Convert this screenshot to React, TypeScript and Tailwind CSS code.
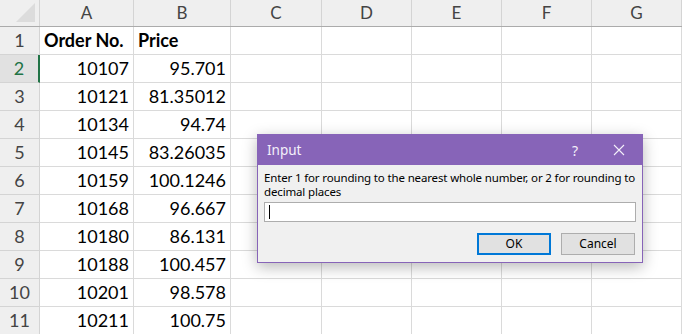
const cols = [
  { name: "A", w: "w-[94px]" },
  { name: "B", w: "w-[97px]" },
  { name: "C", w: "w-[91px]" },
  { name: "D", w: "w-[90px]" },
  { name: "E", w: "w-[90px]" },
  { name: "F", w: "w-[90px]" },
  { name: "G", w: "w-[90px]" },
];

const data: [string, string][] = [
  ["10107", "95.701"],
  ["10121", "81.35012"],
  ["10134", "94.74"],
  ["10145", "83.26035"],
  ["10159", "100.1246"],
  ["10168", "96.667"],
  ["10180", "86.131"],
  ["10188", "100.457"],
  ["10201", "98.578"],
  ["10211", "100.75"],
];

function Dialog() {
  return (
    <div
      className="absolute left-[257px] top-[134px] w-[386px] h-[129px] border border-[#8764b8] bg-[#f0f0f0] shadow-[0_4px_14px_rgba(0,0,0,0.28)] flex flex-col"
      style={{ fontFamily: '"Noto Sans", "Open Sans", sans-serif' }}
    >
      <div className="h-[30px] bg-[#8764b8] flex items-center pl-[9px] pr-[12px] text-white">
        <span className="text-[13.5px] text-[#f4f0fa]">Input</span>
        <span className="ml-auto mr-[35px] text-[14px] text-[#f4f0fa]">?</span>
        <svg width="12" height="12" viewBox="0 0 12 12" className="mr-[5px]">
          <path d="M1 1 L11 11 M11 1 L1 11" stroke="#f4f0fa" strokeWidth="1.1" />
        </svg>
      </div>
      <div className="px-[6px] pt-[6px] text-[11.5px] leading-[14px] text-black tracking-[-0.15px]">
        <div>Enter 1 for rounding to the nearest whole number, or 2 for rounding to</div>
        <div>decimal places</div>
      </div>
      <div className="mx-[6px] mt-[3px] h-[20px] w-[372px] bg-white border border-[#adadad] flex items-center pl-[4px]">
        <div className="w-px h-[14px] bg-black" />
      </div>
      <div className="flex justify-end gap-[10px] mt-[11px] pr-[7px]">
        <button className="w-[74px] h-[22px] bg-[#e1e1e1] border-2 border-[#0078d7] text-[12px] text-black flex items-center justify-center">
          OK
        </button>
        <button className="w-[74px] h-[22px] bg-[#e1e1e1] border border-[#adadad] text-[12px] text-black flex items-center justify-center">
          Cancel
        </button>
      </div>
    </div>
  );
}

export default function App() {
  return (
    <div
      className="relative w-[682px] h-[334px] overflow-hidden bg-white"
      style={{ fontFamily: "Lato, Carlito, sans-serif" }}
    >
      <div className="flex h-[27px] bg-[#efefef] border-b border-[#ababab]">
        <div className="w-[40px] border-r border-[#d4d4d4] relative">
          <div className="absolute right-[4px] bottom-[4px] w-0 h-0 border-l-[19px] border-l-transparent border-b-[19px] border-b-[#dcdcdc]" />
        </div>
        {cols.map((c) => (
          <div
            key={c.name}
            className={`${c.w} border-r border-[#d4d4d4] flex items-center justify-center text-[17px] text-[#444]`}
          >
            {c.name}
          </div>
        ))}
      </div>
      {Array.from({ length: 11 }).map((_, i) => {
        const row = i + 1;
        const active = row === 2;
        const cells: { text: string; bold?: boolean; right?: boolean }[] =
          row === 1
            ? [{ text: "Order No.", bold: true }, { text: "Price", bold: true }]
            : [
                { text: data[i - 1][0], right: true },
                { text: data[i - 1][1], right: true },
              ];
        return (
          <div key={row} className="flex h-[28px]">
            <div
              className={
                active
                  ? "w-[40px] bg-[#e1e1e1] border-b border-[#d4d4d4] border-r-2 border-r-[#217346] flex items-center justify-center text-[18px] text-[#217346]"
                  : "w-[40px] bg-[#efefef] border-b border-r border-[#d4d4d4] flex items-center justify-center text-[18px] text-[#444]"
              }
            >
              {row}
            </div>
            {cols.map((c, ci) => {
              const cell = cells[ci];
              return (
                <div
                  key={c.name}
                  className={`${c.w} border-r border-b border-[#dadada] flex items-center px-[4px] text-[18px] text-black whitespace-nowrap ${
                    cell?.right ? "justify-end" : "justify-start"
                  } ${cell?.bold ? "font-bold text-[18.5px]" : ""}`}
                >
                  {cell?.text}
                </div>
              );
            })}
          </div>
        );
      })}
      <Dialog />
    </div>
  );
}
